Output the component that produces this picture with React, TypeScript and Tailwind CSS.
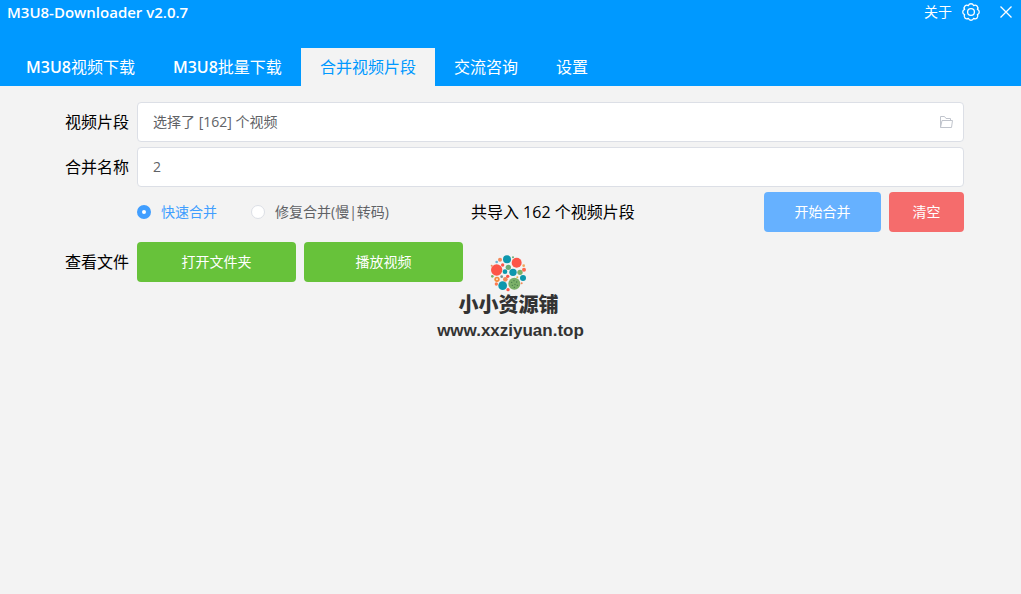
import { useState } from 'react';

const tabs = [
  { latin: 'M3U8', label: '视频下载' },
  { latin: 'M3U8', label: '批量下载' },
  { latin: '', label: '合并视频片段' },
  { latin: '', label: '交流咨询' },
  { latin: '', label: '设置' },
];

const mergeModes = [
  { id: 'fast', label: '快速合并' },
  { id: 'repair', label: '修复合并(慢|转码)' },
];

// cx, cy, r, fill
const dots: [number, number, number, string][] = [
  [54, 19, 12, '#0d97ad'],
  [83, 29, 15, '#fd5548'],
  [23, 51, 17, '#fd5548'],
  [76, 92, 18, '#7bb069'],
  [41, 98, 13, '#0d97ad'],
  [48, 56, 7, '#0d97ad'],
  [72, 58, 11, '#0d97ad'],
  [102, 75, 9, '#0d97ad'],
  [58, 43, 8, '#6bab75'],
  [93, 58, 8, '#7bb069'],
  [33, 20, 6, '#f28a5b'],
  [23, 27, 4, '#6db6d6'],
  [41, 36, 5, '#fd5548'],
  [72, 13, 3, '#6bab75'],
  [104, 38, 4, '#f2a65b'],
  [105, 50, 6, '#fd6a50'],
  [10, 70, 4, '#7bb069'],
  [24, 79, 8, '#f28a3c'],
  [49, 79, 7, '#f28a5b'],
  [38, 71, 4, '#7a8f94'],
  [56, 70, 5, '#fd5548'],
  [22, 93, 5, '#fd7a50'],
  [98, 91, 3, '#f28a5b'],
  [57, 110, 5, '#fd5548'],
  [85, 73, 3, '#e9b44c'],
  [8, 38, 3, '#f28a5b'],
];

const specks = [[68, 88], [75, 83], [83, 87], [70, 97], [78, 94], [85, 97], [76, 103]];

function Logo() {
  return (
    <svg viewBox="0 0 120 120" className="h-10 w-10" aria-hidden="true">
      {dots.map(([cx, cy, r, fill], i) => (
        <circle key={i} cx={cx} cy={cy} r={r} fill={fill} />
      ))}
      <circle cx="24" cy="79" r="3" fill="#fde3c8" />
      {specks.map(([cx, cy], i) => (
        <circle key={i} cx={cx} cy={cy} r="2" fill="#447a49" />
      ))}
    </svg>
  );
}

function GearIcon() {
  return (
    <svg viewBox="0 0 18 18" className="h-[18px] w-[18px]" fill="none" stroke="currentColor" strokeWidth="1.3" strokeLinejoin="round" aria-hidden="true">
      <path d="M6.400 2.600A2.750 2.750 0 0 1 11.600 2.600A2.750 2.750 0 0 1 15.400 6.400A2.750 2.750 0 0 1 15.400 11.600A2.750 2.750 0 0 1 11.600 15.400A2.750 2.750 0 0 1 6.400 15.400A2.750 2.750 0 0 1 2.600 11.600A2.750 2.750 0 0 1 2.600 6.400A2.750 2.750 0 0 1 6.400 2.600z" />
      <circle cx="9" cy="9" r="3.400" />
    </svg>
  );
}

function FolderIcon() {
  return (
    <svg viewBox="0 0 14 14" className="h-3.5 w-3.5" fill="none" stroke="currentColor" aria-hidden="true">
      <path d="M1.500 12.500v-11h4l1.500 2h4.500v2M1.500 12.500l1.500-7h10.500l-1 7z" />
    </svg>
  );
}

export default function App() {
  const [activeTab, setActiveTab] = useState(2);
  const [mode, setMode] = useState('fast');
  const [name, setName] = useState('2');

  return (
    <div className="relative min-h-screen bg-[#f3f3f3] font-['Open_Sans','Noto_Sans_CJK_SC',sans-serif] text-base text-black">
      <header className="bg-[#0099ff] text-white">
        <div className="flex h-12 items-start justify-between pr-[9px] pl-[7px]">
          <h1 className="text-[15px] leading-6 font-semibold">M3U8-Downloader v2.0.7</h1>
          <div className="flex h-6 items-center">
            <button type="button" className="text-sm">关于</button>
            <button type="button" aria-label="设置" className="ml-2.5">
              <GearIcon />
            </button>
            <button type="button" aria-label="关闭" className="ml-5">
              <svg viewBox="0 0 12 12" className="h-3 w-3" fill="none" stroke="currentColor" strokeWidth="1.300" aria-hidden="true">
                <path d="M.5.5l11 11M11.500.5l-11 11" />
              </svg>
            </button>
          </div>
        </div>
        <nav className="flex pl-[7px]">
          {tabs.map((tab, i) => (
            <button
              key={tab.label}
              type="button"
              onClick={() => setActiveTab(i)}
              className={`h-[38px] px-[19px] ${i === activeTab ? 'bg-[#f3f3f3] text-[#0099ff]' : ''}`}
            >
              {tab.latin && <span className="font-semibold">{tab.latin}</span>}
              {tab.label}
            </button>
          ))}
        </nav>
      </header>

      <main className="px-[57px] pt-4">
        <div className="flex items-center">
          <label htmlFor="clips" className="w-20 px-2">视频片段</label>
          <div className="flex h-10 flex-1 items-center rounded border border-[#dcdfe6] bg-white pr-2.5">
            <input
              id="clips"
              readOnly
              value="选择了 [162] 个视频"
              className="h-full min-w-0 flex-1 pb-0.5 pl-[15px] text-sm text-[#606266] outline-none"
            />
            <button type="button" aria-label="选择文件" className="text-[#c0c4cc]">
              <FolderIcon />
            </button>
          </div>
        </div>

        <div className="mt-[5px] flex items-center">
          <label htmlFor="name" className="w-20 px-2">合并名称</label>
          <input
            id="name"
            value={name}
            onChange={(e) => setName(e.target.value)}
            className="h-10 min-w-0 flex-1 rounded border border-[#dcdfe6] bg-white px-[15px] pb-0.5 text-sm text-[#606266] outline-none"
          />
        </div>

        <div className="mt-[5px] flex h-10 items-center pl-20">
          {mergeModes.map((m) => (
            <label
              key={m.id}
              className={`mr-[34px] flex items-center gap-2.5 text-sm ${mode === m.id ? 'text-[#409eff]' : 'text-[#606266]'}`}
            >
              <input
                type="radio"
                name="mode"
                checked={mode === m.id}
                onChange={() => setMode(m.id)}
                className="h-3.5 w-3.5 appearance-none rounded-full border border-[#dcdfe6] bg-white checked:border-[5px] checked:border-[#409eff]"
              />
              {m.label}
            </label>
          ))}
          <span className="ml-12">共导入 162 个视频片段</span>
          <button type="button" className="ml-auto h-10 w-[117px] rounded bg-[#66b1ff] text-sm text-white">开始合并</button>
          <button type="button" className="ml-2 h-10 w-[75px] rounded bg-[#f56c6c] text-sm text-white">清空</button>
        </div>

        <div className="mt-2.5 flex items-center">
          <span className="w-20 px-2">查看文件</span>
          <button type="button" className="h-10 w-[159px] rounded bg-[#67c23a] text-sm text-white">打开文件夹</button>
          <button type="button" className="ml-2 h-10 w-[159px] rounded bg-[#67c23a] text-sm text-white">播放视频</button>
        </div>
      </main>

      {/* Watermark over the page */}
      <div className="pointer-events-none absolute inset-x-0 top-[253px] flex flex-col items-center pr-1 text-[#333333]">
        <Logo />
        <span className="font-['Noto_Sans_CJK_SC',sans-serif] text-[20px] leading-[22px] font-black">小小资源铺</span>
        <span className="mt-1 pl-1 font-['Liberation_Sans',sans-serif] text-[17px] leading-6 font-bold">www.xxziyuan.top</span>
      </div>
    </div>
  );
}
